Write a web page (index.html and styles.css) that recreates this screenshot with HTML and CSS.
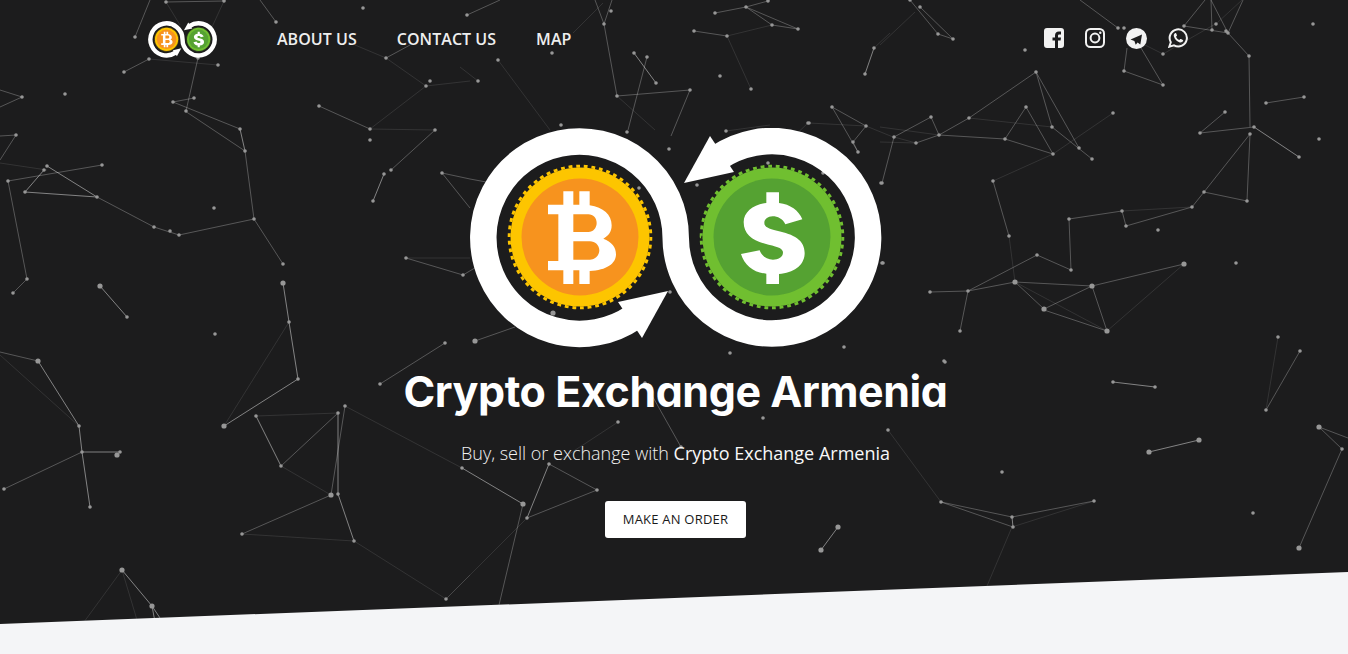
FILE: index.html
```html
<!DOCTYPE html>
<html lang="en">
<head>
<meta charset="utf-8">
<title>Crypto Exchange Armenia</title>
<link rel="stylesheet" href="styles.css">
</head>
<body>
<svg class="sprite" aria-hidden="true">
  <symbol id="logo" viewBox="469 128 413 220">
    <path class="band" d="M634 317A96.2 96.2 0 1 1 675.7 237.5A96.2 96.2 0 1 0 717.4 158"/>
    <path class="arrow" d="M668 291L618 302L642 338Z"/>
    <path class="arrow" d="M684 183L734 172L710 136Z"/>
    <g class="coin-btc">
      <circle class="rim" cx="580" cy="237" r="69.5"/>
      <circle class="teeth" cx="580" cy="237" r="70.8" pathLength="116"/>
      <circle class="face" cx="580" cy="237" r="58.5"/>
      <g transform="translate(580 237) scale(.3333) translate(-360 -350)">
        <path class="symbol" fill-rule="evenodd" d="M264 253H310V213H340V253H358V213H389V255C430 262 455 283 455 315C455 335 445 347 430 355C455 365 468 380 468 402C468 430 440 450 389 452V491H358V450H340V491H310V450H264V422H295V282H264Z M340 282V335H385C400 335 410 322 410 308C410 294 400 282 385 282Z M340 363V418H390C405 418 418 405 418 390C418 375 405 363 390 363Z"/>
      </g>
    </g>
    <g class="coin-usd">
      <circle class="rim" cx="772" cy="237" r="69.5"/>
      <circle class="teeth" cx="772" cy="237" r="70.8" pathLength="116"/>
      <circle class="face" cx="772" cy="237" r="58.5"/>
      <g transform="translate(772 237) scale(.3333) translate(-305 -350)">
        <path class="symbol" d="M288 216H326V248C360 252 385 270 396 297L345 312C337 295 322 288 307 288C292 288 282 297 282 308C282 320 295 325 320 331C370 342 403 358 403 398C403 435 370 458 326 461V491H288V460C250 457 222 435 212 401L268 390C275 408 290 418 308 418C326 418 338 408 338 397C338 385 325 380 295 373C250 362 220 345 220 305C220 275 250 252 288 248Z"/>
      </g>
    </g>
  </symbol>
</svg>

<section class="hero">
  <svg class="network" viewBox="0 0 1348 654" aria-hidden="true">
    <path class="link faint" d="M166 2L180 25M224 1L212 27M149 59L218 65M0 163L47 170M355 45L386 58M386 58L426 86M370 129L426 86M370 129L435 130M426 86L470 81M406 258L470 258M0 355L79 426M289 322L224 426M256 416L338 413M281 466L331 495M242 534L354 541M354 541L446 599M446 599L470 575M345 406L462 468M122 570L84 622M122 570L137 620M527 518L446 599M618 422L560 460M888 430L941 502M498 60L550 130M460 67L478 81M617 96L655 130M603 3L573 33M727 36L772 25M727 36L751 89M874 48L890 33M809 123L866 126M726 131L770 125M808 123L790 140M1012 527L1094 501M1012 527L987 586M1015 282L1107 331M1278 337L1266 410M915 12L880 45M1163 54L1217 23M1217 23L1242 0M1122 211L1192 207M1009 236L1015 282M969 118L1052 127M1053 154L1113 113M1053 154L993 181M880 127L939 135M880 142L916 143M894 137L916 143M866 126L893 137M1184 264L1107 331M1135 40L1163 54"/>
    <path class="link mid" d="M150 0L135 37M166 2L224 1M260 0L276 22M198 58L186 111M149 59L124 72M173 102L194 98M173 102L240 129M185 111L245 151M245 151L254 219M254 219L179 235M254 219L283 264M179 235L154 227M154 227L97 197M8 181L102 165M8 181L27 279M27 279L13 293M0 90L22 97M22 97L0 107M0 136L16 135M16 135L0 160M319 106L370 129M435 130L391 170M386 58L410 45M406 258L463 275M463 275L495 256M442 173L470 179M442 173L470 208M470 179L497 184M0 352L38 361M82 452L4 489M281 466L338 413M345 406L331 495M331 495L242 534M380 384L445 343M523 504L499 605M597 490L527 518M549 464L597 490M645 383L681 447M475 341L515 327M500 0L467 15M604 24L595 0M604 24L612 0M604 24L617 96M617 96L690 90M690 90L671 136M647 57L628 130M715 13L746 7M746 7L768 1M746 7L798 29M746 7L772 25M772 25L798 29M694 31L727 36M832 107L866 126M832 107L858 152M866 126L853 142M853 142L858 152M941 502L1012 517M941 502L1013 527M1012 517L1094 501M1044 310L1107 331M1092 286L1107 331M968 291L960 331M1266 410L1300 351M1319 427L1342 449M1319 427L1348 438M1342 449L1299 548M910 0L938 34M920 7L953 39M938 34L953 39M1080 0L1118 28M1124 71L1163 85M1124 71L1127 48M1163 85L1141 48M1184 26L1205 0M1184 26L1228 33M1211 0L1212 30M1211 0L1228 33M1243 0L1228 33M1228 33L1249 56M1249 56L1250 127M1266 103L1304 97M1225 112L1200 133M1200 133L1254 127M1250 134L1204 192M1250 134L1247 201M1204 192L1247 201M1204 192L1192 207M1069 219L1122 211M1122 211L1126 226M1126 226L1192 207M1069 219L1071 270M1071 270L1037 255M1037 255L968 291M930 292L968 291M968 291L1015 282M1015 282L1092 286M1092 286L1184 264M1015 282L1044 309M1044 309L1092 286M993 181L1009 236M969 118L1036 72M1036 72L1052 127M1036 72L1079 148M1052 127L1092 159M939 135L969 118M916 143L939 135M939 135L1005 139M1005 139L1026 107M1026 107L1053 154M1005 139L1053 154M894 137L931 117M931 117L939 135M894 137L882 183"/>
    <path class="link strong" d="M100 286L127 317M283 283L289 322M289 322L298 379M298 379L224 426M25 192L44 170M97 197L47 166M97 197L25 192M384 174L373 201M38 361L79 426M79 426L82 452M82 452L120 452M82 452L90 507M256 416L281 466M338 413L338 494M338 494L354 541M122 570L152 606M152 606L155 622M152 606L160 618M462 468L523 504M549 464L527 518M634 53L656 83M838 527L821 550M1012 517L1013 527M1113 382L1155 387M1199 440L1149 452M865 74L874 48M240 129L245 151M1254 127L1299 157"/>
    <path class="dot small" d="M135 37h0M166 2h0M224 1h0M276 22h0M363 8h0M467 15h0M198 58h0M186 111h0M149 59h0M124 72h0M218 65h0M173 102h0M194 98h0M240 129h0M245 151h0M254 219h0M283 264h0M179 235h0M170 231h0M154 227h0M97 197h0M47 166h0M25 192h0M44 170h0M102 165h0M8 181h0M27 279h0M13 293h0M22 97h0M16 135h0M65 94h0M214 208h0M127 317h0M289 322h0M298 379h0M319 106h0M370 129h0M426 86h0M435 130h0M391 170h0M370 140h0M384 174h0M373 201h0M386 58h0M430 81h0M406 258h0M463 275h0M442 173h0M215 334h0M79 426h0M82 452h0M120 452h0M4 489h0M90 507h0M256 416h0M338 413h0M281 466h0M345 406h0M338 494h0M242 534h0M354 541h0M446 599h0M380 384h0M445 343h0M462 468h0M549 464h0M597 490h0M527 518h0M618 422h0M645 383h0M681 447h0M763 418h0M888 430h0M941 502h0M945 362h0M960 331h0M944 361h0M1113 382h0M1155 387h0M1278 337h0M1266 410h0M1300 351h0M1342 449h0M1253 513h0M1002 472h0M1012 517h0M1013 527h0M1094 501h0M910 0h0M920 7h0M938 34h0M953 39h0M1025 50h0M1118 28h0M1124 28h0M1163 54h0M1124 71h0M1163 85h0M1184 26h0M1212 30h0M1226 31h0M1228 33h0M1216 24h0M1249 56h0M1313 24h0M1266 103h0M1304 97h0M1225 112h0M1200 133h0M1254 127h0M1299 157h0M1319 139h0M1250 134h0M1204 192h0M1247 201h0M1192 207h0M1122 211h0M1126 226h0M1069 219h0M1071 270h0M1037 255h0M1158 230h0M1236 263h0M968 291h0M930 292h0M993 181h0M1009 236h0M1113 113h0M1053 154h0M1036 72h0M969 118h0M1052 127h0M1079 148h0M1092 159h0M1026 107h0M1005 139h0M939 135h0M916 143h0M931 117h0M894 137h0M882 183h0M883 263h0M604 24h0M611 11h0M617 96h0M690 90h0M552 53h0M498 60h0M478 81h0M634 53h0M656 83h0M647 57h0M561 125h0M715 13h0M746 7h0M768 1h0M798 29h0M772 25h0M727 36h0M694 31h0M751 89h0M720 76h0M874 48h0M865 74h0M832 107h0M866 126h0M809 123h0M853 142h0M858 152h0M627 132h0M669 149h0M639 188h0M670 292h0M697 185h0M726 131h0M808 123h0M823 173h0M768 163h0M881 183h0M882 263h0M730 353h0M844 347h0"/>
    <path class="dot large" d="M38 361h0M122 570h0M152 606h0M117 455h0M283 283h0M331 495h0M1199 440h0M1149 452h0M1319 427h0M1184 264h0M523 504h0M838 527h0M821 550h0M1299 548h0M224 426h0M100 286h0M1044 309h0M1015 282h0M1092 286h0M475 341h0M553 313h0M1107 331h0"/>
  </svg>

  <nav class="topbar">
    <div class="topbar-left">
      <a class="brand" href="#" aria-label="Crypto Exchange Armenia">
        <svg class="brand-logo"><use href="#logo"/></svg>
      </a>
      <ul class="menu">
        <li><a href="#">About us</a></li>
        <li><a href="#">Contact us</a></li>
        <li><a href="#">Map</a></li>
      </ul>
    </div>
    <div class="social">
      <a href="#" aria-label="Facebook">
        <svg class="social-icon" viewBox="0 0 20 20"><path class="icon-fill" d="M3 0H17A3 3 0 0 1 20 3V17A3 3 0 0 1 17 20H14V12.5H16.6L17 9.5H14V7.8C14 7 14.3 6.4 15.4 6.4H17V3.6C16.6 3.5 15.7 3.5 14.8 3.5C12.6 3.5 11 4.8 11 7.4V9.5H8.5V12.5H11V20H3A3 3 0 0 1 0 17V3A3 3 0 0 1 3 0Z"/></svg>
      </a>
      <a href="#" aria-label="Instagram">
        <svg class="social-icon" viewBox="0 0 20 20"><rect class="icon-line" x="1" y="1" width="18" height="18" rx="4.5"/><circle class="icon-line" cx="10" cy="10" r="4.4"/><circle class="icon-fill" cx="15.3" cy="4.7" r="1.2"/></svg>
      </a>
      <a href="#" aria-label="Telegram">
        <svg class="social-icon social-icon-round" viewBox="0 0 21 21"><circle class="icon-fill" cx="10.5" cy="10.5" r="10.5"/><path class="icon-cut" d="M16 6.6L4.5 11.4L8.4 12.9L9.7 16.8L11.6 14.5L14.3 16.4Z"/></svg>
      </a>
      <a href="#" aria-label="WhatsApp">
        <svg class="social-icon" viewBox="0 0 20 20"><path class="icon-line" d="M1.3 18.7L2.8 14.2A8.6 8.6 0 1 1 6 17.4Z"/><path class="icon-fill" d="M7 5.2C6 5.8 5.5 7 5.9 8.5C6.7 11.4 9 13.6 11.8 14.4C13.3 14.7 14.6 14 15.1 13C15.3 12.5 15.2 12.1 14.9 11.9L13 11C12.6 10.8 12.3 10.9 12 11.3L11.4 12C9.8 11.4 8.6 10.2 8 8.7L8.7 8C9 7.6 9.1 7.4 8.9 7L8.1 5.3C7.9 5 7.4 4.9 7 5.2Z"/></svg>
      </a>
    </div>
  </nav>

  <div class="intro">
    <svg class="intro-logo"><use href="#logo"/></svg>
    <h1 class="intro-title">Crypto Exchange Armenia</h1>
    <p class="intro-text">Buy, sell or exchange with <strong>Crypto Exchange Armenia</strong></p>
    <a class="order-button" href="#">Make an order</a>
  </div>
</section>
<div class="below"></div>
</body>
</html>
```
FILE: styles.css
```css
* { box-sizing: border-box; }
html, body { margin: 0; padding: 0; }
body {
  background: #f4f5f7;
  font-family: "Open Sans", "Liberation Sans", sans-serif;
  overflow: hidden;
}
.sprite { position: absolute; width: 0; height: 0; }

.hero {
  position: relative;
  height: 624px;
  background: #1c1c1d;
  clip-path: polygon(0 0, 100% 0, 100% 572px, 0 100%);
}
.below { height: 30px; }

.network {
  position: absolute;
  left: 0;
  top: 0;
  width: 1348px;
  height: 654px;
}
.link { fill: none; stroke: #fff; stroke-width: 1; }
.link.faint { stroke-opacity: .1; }
.link.mid { stroke-opacity: .26; }
.link.strong { stroke-opacity: .45; }
.dot { fill: none; stroke: #979797; stroke-linecap: round; }
.dot.small { stroke-width: 3.6; }
.dot.large { stroke-width: 5.2; }

.topbar {
  position: relative;
  display: flex;
  justify-content: space-between;
  align-items: center;
  padding: 21px 160px 0 148px;
}
.topbar-left { display: flex; align-items: center; gap: 60px; }
.brand { display: block; height: 37px; }
.brand-logo { display: block; width: 69px; height: 37px; }
.menu {
  display: flex;
  gap: 40px;
  list-style: none;
  margin: 0 0 2px;
  padding: 0;
}
.menu a {
  color: #eee;
  font-size: 16px;
  font-weight: 600;
  line-height: 22px;
  letter-spacing: .04px;
  text-decoration: none;
  text-transform: uppercase;
}
.social { display: flex; align-items: center; gap: 21px; margin-bottom: 3px; }
.social a { display: block; height: 20px; }
.social-icon { display: block; width: 20px; height: 20px; }
.social-icon-round { width: 21px; height: 21px; }
.icon-fill { fill: #f2f2f2; }
.icon-line { fill: none; stroke: #f2f2f2; stroke-width: 2; }
.icon-cut { fill: #1c1c1d; }

.intro {
  position: relative;
  display: flex;
  flex-direction: column;
  align-items: center;
  margin-top: 70px;
  padding-left: 3px;
}
.intro-logo { display: block; width: 413px; height: 220px; }
.intro-title {
  margin: 19px 0 0;
  color: #fff;
  font-family: Inter, "Liberation Sans", sans-serif;
  font-feature-settings: "cv11";
  font-size: 43px;
  font-weight: 650;
  line-height: 48px;
  letter-spacing: -.45px;
}
.intro-text {
  margin: 26px 0 0;
  color: #f2f2f2;
  font-size: 18px;
  font-weight: 300;
  line-height: 24px;
}
.intro-text strong { color: #f8f8f8; font-weight: 400; }
.order-button {
  margin-top: 36px;
  padding: 0 18px;
  height: 37px;
  line-height: 36px;
  background: #fff;
  border-radius: 3px;
  color: #1a1a1a;
  font-size: 13px;
  font-weight: 400;
  text-decoration: none;
  text-transform: uppercase;
  letter-spacing: .22px;
}

.band { fill: none; stroke: #fff; stroke-width: 26.5; }
.arrow { fill: #fff; }
.symbol { fill: #fff; }
.teeth { fill: none; stroke-width: 3; stroke-dasharray: 1 1; }
.coin-btc .rim { fill: #fdc500; }
.coin-btc .teeth { stroke: #fdc500; }
.coin-btc .face { fill: #f7931e; }
.coin-usd .rim { fill: #70bf30; }
.coin-usd .teeth { stroke: #70bf30; }
.coin-usd .face { fill: #55a232; }
```
